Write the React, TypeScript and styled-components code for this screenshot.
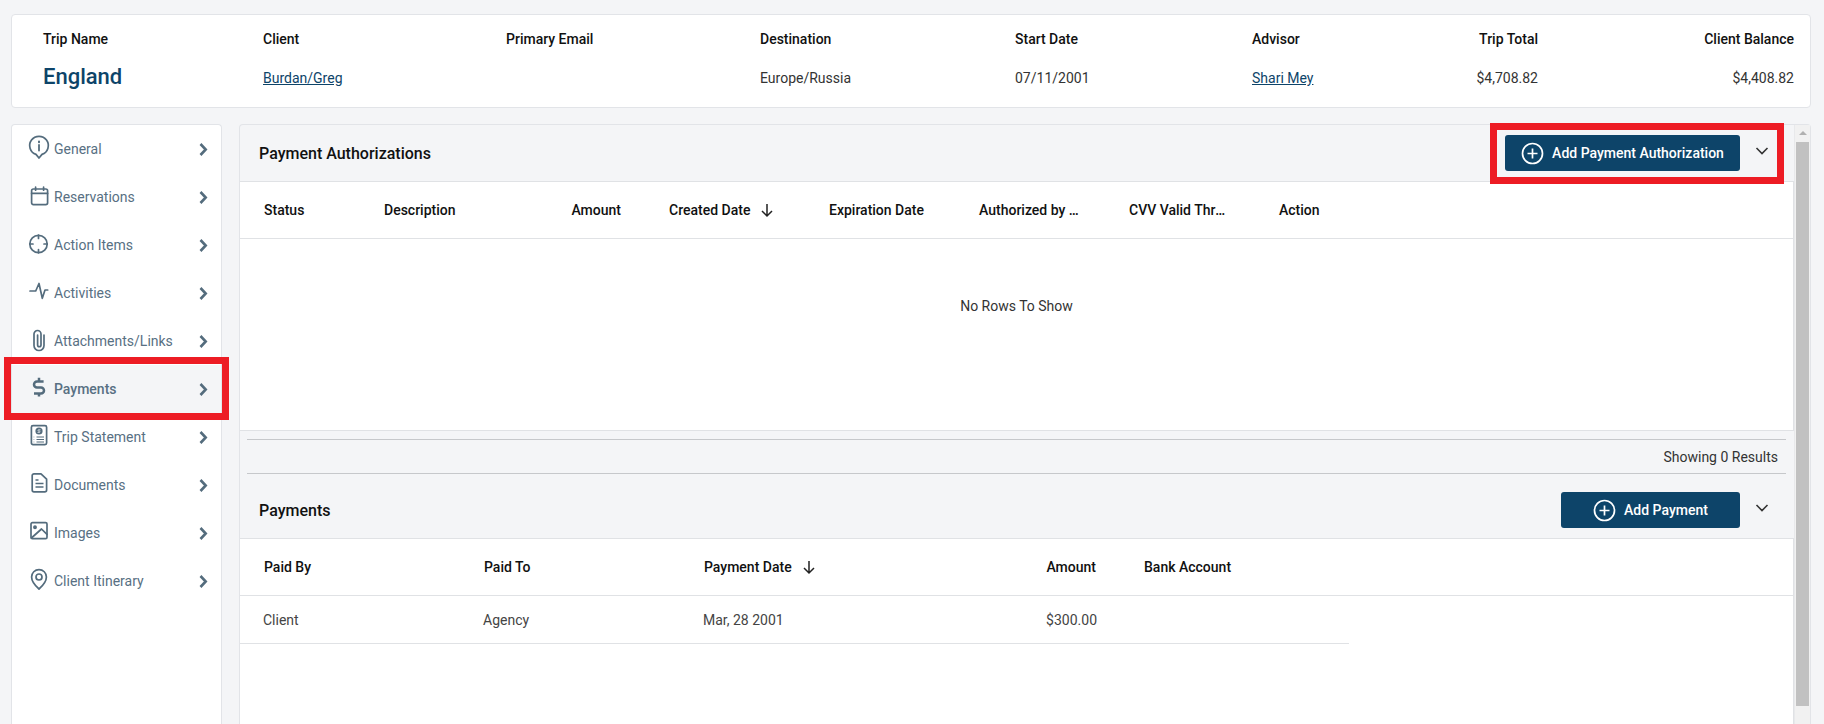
import React from "react";
import styled, { createGlobalStyle } from "styled-components";

const Global = createGlobalStyle`
  html, body { margin: 0; padding: 0; background: #f4f5f7; }
  body { font-family: Roboto, "Liberation Sans", sans-serif; font-size: 14px; color: #333; }
  * { box-sizing: border-box; }
`;

const Page = styled.div`
  width: 1824px;
  height: 724px;
  overflow: hidden;
  padding: 14px 13px 0 11px;
  display: flex;
  flex-direction: column;
  gap: 16px;
`;

const TripCard = styled.section`
  flex: none;
  height: 94px;
  background: #fff;
  border: 1px solid #e2e4e8;
  border-radius: 4px;
  padding: 14px 16px 0 31px;
  display: grid;
  grid-template-columns: 220px 243px 254px 255px 237px 150px 136px 1fr;
  grid-template-rows: 20px 38px;
  row-gap: 10px;
`;

const TripField = styled.div<{ $right?: boolean }>`
  grid-row: span 2;
  display: grid;
  grid-template-rows: subgrid;
  text-align: ${(p) => (p.$right ? "right" : "left")};
`;

const TripLabel = styled.div`
  font-weight: 500;
  color: #111;
  line-height: 20px;
`;

const TripValue = styled.div`
  line-height: 38px;
  color: #333;
`;

const TripName = styled.div`
  font-size: 22px;
  font-weight: 500;
  line-height: 36px;
  color: #0d4469;
`;

const TripLink = styled.a`
  color: #0d4469;
  text-decoration: underline;
`;

const Body = styled.div`
  flex: 1;
  min-height: 0;
  display: flex;
  gap: 17px;
`;

const Sidebar = styled.nav`
  flex: none;
  width: 211px;
  background: #fff;
  border: 1px solid #e2e4e8;
  border-bottom: none;
  border-radius: 4px 4px 0 0;
  margin-bottom: -4px;
`;

const NavItem = styled.div<{ $active?: boolean }>`
  position: relative;
  height: 48px;
  display: flex;
  align-items: center;
  padding: 0 13px 0 15px;
  color: #587083;
  background: ${(p) => (p.$active ? "#f4f5f7" : "transparent")};
  font-weight: ${(p) => (p.$active ? 500 : 400)};
  ${(p) =>
    p.$active
      ? `&::after { content: ""; position: absolute; inset: -8px -8px -7px -8px; border: 7px solid #ed1c24; pointer-events: none; }`
      : ""}
`;

const NavIcon = styled.svg`
  flex: none;
  width: 24px;
  height: 24px;
  margin-right: 3px;
  overflow: visible;
  fill: none;
  stroke: #546c7d;
  stroke-width: 1.7;
  stroke-linecap: round;
  stroke-linejoin: round;
`;

const NavLabel = styled.span`
  flex: 1;
`;

const NavChevron = styled.svg`
  flex: none;
  width: 9px;
  height: 13px;
  fill: none;
  stroke: #546c7d;
  stroke-width: 2.6;
`;

const Panel = styled.main`
  flex: 1;
  min-width: 0;
  display: flex;
  background: #f4f5f7;
  border: 1px solid #e2e4e8;
  border-bottom: none;
  border-radius: 4px 4px 0 0;
`;

const PanelContent = styled.div`
  flex: 1;
  min-width: 0;
  display: flex;
  flex-direction: column;
`;

const Scrollbar = styled.div`
  flex: none;
  width: 16px;
  background: #f1f1f1;
  border-left: 1px solid #e8e9eb;
  padding: 17px 1px 0 1px;
  position: relative;
`;

const ScrollArrow = styled.div`
  position: absolute;
  top: 6px;
  left: 4px;
  width: 0;
  height: 0;
  border-left: 4px solid transparent;
  border-right: 4px solid transparent;
  border-bottom: 4px solid #b0b0b0;
`;

const ScrollThumb = styled.div`
  height: 564px;
  background: #c1c1c1;
`;

const SectionHeader = styled.header<{ $height: number; $top?: number }>`
  flex: none;
  height: ${(p) => p.$height}px;
  display: flex;
  align-items: center;
  justify-content: space-between;
  padding: ${(p) => p.$top ?? 0}px 25px 0 19px;
  border-bottom: 1px solid #e0e2e5;
`;

const SectionTitle = styled.h2`
  margin: 0;
  font-size: 16px;
  font-weight: 500;
  color: #111;
`;

const Actions = styled.div<{ $marked?: boolean }>`
  position: relative;
  display: flex;
  align-items: center;
  gap: 15px;
  ${(p) =>
    p.$marked
      ? `&::after { content: ""; position: absolute; left: -15px; right: -15px; top: -12px; bottom: -13px; border: 7px solid #ed1c24; pointer-events: none; }`
      : ""}
`;

const AddButton = styled.button<{ $width: number }>`
  width: ${(p) => p.$width}px;
  height: 36px;
  border: none;
  border-radius: 3px;
  background: #0d4469;
  color: #fff;
  font: 500 14px Roboto, "Liberation Sans", sans-serif;
  display: flex;
  align-items: center;
  justify-content: center;
  gap: 8px;
  padding: 0;
`;

const CollapseIcon = styled.svg`
  width: 14px;
  height: 10px;
  margin-top: -4px;
  fill: none;
  stroke: #333;
  stroke-width: 1.6;
`;

const TableArea = styled.div<{ $height?: number }>`
  flex: ${(p) => (p.$height ? "none" : "1")};
  height: ${(p) => (p.$height ? `${p.$height}px` : "auto")};
  background: #fff;
  border-right: 1px solid #e0e2e5;
  border-bottom: ${(p) => (p.$height ? "1px solid #e0e2e5" : "none")};
  display: flex;
  flex-direction: column;
`;

const GridRow = styled.div<{ $cols: string; $height: number; $plain?: boolean }>`
  flex: none;
  display: grid;
  grid-template-columns: ${(p) => p.$cols};
  height: ${(p) => p.$height}px;
  width: max-content;
  align-items: center;
  border-bottom: ${(p) => (p.$plain ? "none" : "1px solid #e0e2e5")};
`;

const HeaderStrip = styled.div`
  border-bottom: 1px solid #e0e2e5;
  flex: none;
`;

const HeadCell = styled.div<{ $right?: boolean }>`
  padding: 0 24px;
  font-weight: 500;
  color: #111;
  white-space: nowrap;
  overflow: hidden;
  text-overflow: ellipsis;
  text-align: ${(p) => (p.$right ? "right" : "left")};
`;

const SortArrow = styled.svg`
  width: 16px;
  height: 16px;
  margin-left: 9px;
  vertical-align: -3px;
  fill: none;
  stroke: #222;
  stroke-width: 1.5;
`;

const BodyCell = styled.div<{ $right?: boolean }>`
  padding: 0 23px;
  color: #444;
  text-align: ${(p) => (p.$right ? "right" : "left")};
`;

const EmptyState = styled.div`
  flex: 1;
  display: flex;
  align-items: center;
  justify-content: center;
  color: #333;
  padding-bottom: 57px;
`;

const GridFooter = styled.div`
  flex: none;
  height: 35px;
  margin: 8px 8px 0 7px;
  border-top: 1px solid #c6c8cb;
  border-bottom: 1px solid #c6c8cb;
  display: flex;
  align-items: center;
  justify-content: flex-end;
  padding-right: 8px;
  color: #333;
`;

const Arrow = () => (
  <SortArrow viewBox="0 0 16 16">
    <path d="M8 2v12M3 9l5 5 5-5" />
  </SortArrow>
);

const PlusCircle = () => (
  <svg width="23" height="23" viewBox="0 0 23 23" fill="none" stroke="#fff" strokeWidth="1.7">
    <circle cx="11.5" cy="11.5" r="10" />
    <path d="M11.5 6.5v10M6.5 11.5h10" />
  </svg>
);

const Collapse = () => (
  <CollapseIcon viewBox="0 0 14 10">
    <path d="M1.5 2l5.5 5.5L12.5 2" />
  </CollapseIcon>
);

const icons: Record<string, React.ReactNode> = {
  General: (
    <>
      <path d="M12 21l-3-3.6A9.3 9.3 0 1 1 15 17.4Z" />
      <path d="M12 8v5.5" strokeWidth="1.8" />
      <path d="M12 4.6v.6" strokeWidth="2" />
    </>
  ),
  Reservations: (
    <>
      <rect x="4.6" y="4" width="16" height="15.6" rx="1.8" />
      <path d="M4.6 8.4h16M8.6 2.2v3M16.6 2.2v3" />
    </>
  ),
  "Action Items": (
    <>
      <circle cx="11.5" cy="11" r="8.7" />
      <path d="M11.5 2.2v3.2M11.5 16.6v3.2M2.8 11h3.2M17 11h3.2" />
    </>
  ),
  Activities: <path d="M3 10h5.7L12 2.5l3.3 14.8L18 9h2.7" />,
  "Attachments/Links": <path d="M17 6v10.5a5 5 0 0 1-10 0V5a3.5 3.5 0 0 1 7 0v11a1.7 1.7 0 0 1-3.4 0V6" />,
  Payments: (
    <g strokeWidth="2.5" strokeLinecap="butt">
      <path d="M12 .8v3.4M12 16v3.4" />
      <path d="M16.6 4.5H10a3 3 0 0 0 0 6h4a3 3 0 0 1 0 6H7" />
    </g>
  ),
  "Trip Statement": (
    <>
      <rect x="4.4" y=".6" width="15.2" height="19" rx="1.6" />
      <circle cx="12" cy="6" r="3.6" fill="#546c7d" stroke="none" />
      <path d="M13.1 4.8h-1.7a.7.7 0 0 0 0 1.3h1.2a.7.7 0 0 1 0 1.3h-1.7" stroke="#fff" strokeWidth=".7" />
      <path d="M9.5 12h7.5M9.5 14.5h7.5M9.5 17h7.5M6.7 12h.5M6.7 14.5h.5M6.7 17h.5" strokeWidth="1.1" strokeLinecap="butt" />
    </>
  ),
  Documents: (
    <>
      <path d="M7 .8h7l5.6 5.4V17a1.8 1.8 0 0 1-1.8 1.8H7A1.8 1.8 0 0 1 5.2 17V2.6A1.8 1.8 0 0 1 7 .8Z" />
      <path d="M8.5 7h3M8.5 10.5h8M8.5 14h8" strokeLinecap="butt" />
    </>
  ),
  Images: (
    <>
      <rect x="4" y="1.6" width="16" height="16" rx="1.4" />
      <circle cx="8" cy="6.2" r="1.1" fill="#546c7d" />
      <path d="M4.4 17L14.5 8l5.5 5.4" />
    </>
  ),
  "Client Itinerary": (
    <>
      <path d="M12 20C8 16.5 4.6 13 4.6 8a7.4 7.4 0 0 1 14.8 0C19.4 13 16 16.5 12 20Z" />
      <circle cx="12" cy="8" r="3" />
    </>
  ),
};

const navItems = Object.keys(icons);

const tripFields = [
  { label: "Client", value: <TripLink>Burdan/Greg</TripLink> },
  { label: "Primary Email", value: "" },
  { label: "Destination", value: "Europe/Russia" },
  { label: "Start Date", value: "07/11/2001" },
  { label: "Advisor", value: <TripLink>Shari Mey</TripLink> },
];

const authCols = "120px 160px 125px 160px 150px 150px 150px 150px";
const payCols = "220px 220px 220px 220px 229px";

export default function App() {
  return (
    <>
      <Global />
      <Page>
        <TripCard>
          <TripField>
            <TripLabel>Trip Name</TripLabel>
            <TripName>England</TripName>
          </TripField>
          {tripFields.map((f) => (
            <TripField key={f.label}>
              <TripLabel>{f.label}</TripLabel>
              <TripValue>{f.value}</TripValue>
            </TripField>
          ))}
          <TripField $right>
            <TripLabel>Trip Total</TripLabel>
            <TripValue>$4,708.82</TripValue>
          </TripField>
          <TripField $right>
            <TripLabel>Client Balance</TripLabel>
            <TripValue>$4,408.82</TripValue>
          </TripField>
        </TripCard>
        <Body>
          <Sidebar>
            {navItems.map((name) => (
              <NavItem key={name} $active={name === "Payments"}>
                <NavIcon viewBox="0 0 24 24">{icons[name]}</NavIcon>
                <NavLabel>{name}</NavLabel>
                <NavChevron viewBox="0 0 9 13">
                  <path d="M1.5 1l5.2 5.5L1.5 12" />
                </NavChevron>
              </NavItem>
            ))}
          </Sidebar>
          <Panel>
            <PanelContent>
              <SectionHeader $height={57}>
                <SectionTitle>Payment Authorizations</SectionTitle>
                <Actions $marked>
                  <AddButton $width={235}>
                    <PlusCircle />
                    Add Payment Authorization
                  </AddButton>
                  <Collapse />
                </Actions>
              </SectionHeader>
              <TableArea $height={249}>
                <HeaderStrip>
                  <GridRow $cols={authCols} $height={56} $plain>
                    <HeadCell>Status</HeadCell>
                    <HeadCell>Description</HeadCell>
                    <HeadCell $right>Amount</HeadCell>
                    <HeadCell>
                      Created Date
                      <Arrow />
                    </HeadCell>
                    <HeadCell>Expiration Date</HeadCell>
                    <HeadCell>Authorized by Client</HeadCell>
                    <HeadCell>CVV Valid Through</HeadCell>
                    <HeadCell>Action</HeadCell>
                  </GridRow>
                </HeaderStrip>
                <EmptyState>No Rows To Show</EmptyState>
              </TableArea>
              <GridFooter>Showing 0 Results</GridFooter>
              <SectionHeader $height={65} $top={8}>
                <SectionTitle>Payments</SectionTitle>
                <Actions>
                  <AddButton $width={179}>
                    <PlusCircle />
                    Add Payment
                  </AddButton>
                  <Collapse />
                </Actions>
              </SectionHeader>
              <TableArea>
                <HeaderStrip>
                  <GridRow $cols={payCols} $height={56} $plain>
                    <HeadCell>Paid By</HeadCell>
                    <HeadCell>Paid To</HeadCell>
                    <HeadCell>
                      Payment Date
                      <Arrow />
                    </HeadCell>
                    <HeadCell $right>Amount</HeadCell>
                    <HeadCell>Bank Account</HeadCell>
                  </GridRow>
                </HeaderStrip>
                <GridRow $cols={payCols} $height={48}>
                  <BodyCell>Client</BodyCell>
                  <BodyCell>Agency</BodyCell>
                  <BodyCell>Mar, 28 2001</BodyCell>
                  <BodyCell $right>$300.00</BodyCell>
                  <BodyCell />
                </GridRow>
              </TableArea>
            </PanelContent>
            <Scrollbar>
              <ScrollArrow />
              <ScrollThumb />
            </Scrollbar>
          </Panel>
        </Body>
      </Page>
    </>
  );
}
